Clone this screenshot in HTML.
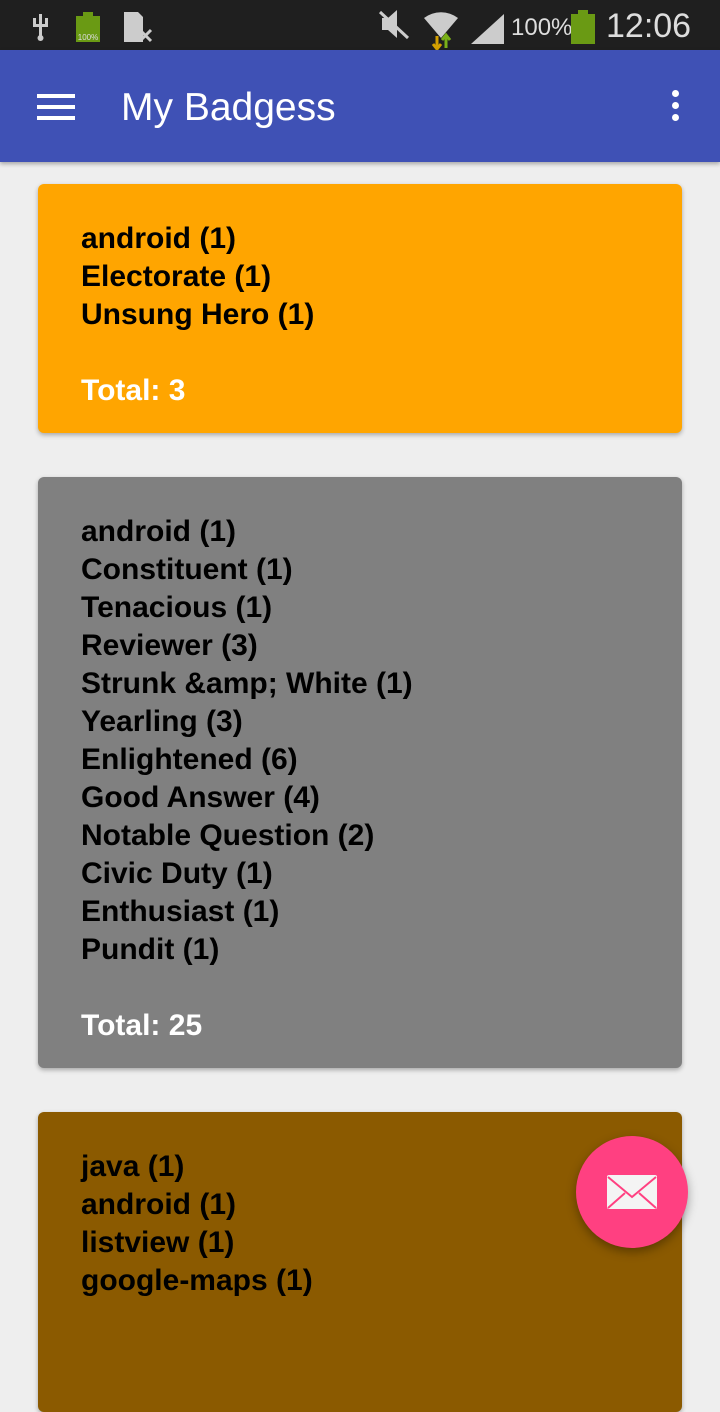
<!DOCTYPE html>
<html><head><style>
body{margin:0;width:720px;height:1280px;overflow:hidden;background:#eeeeee;font-family:"Liberation Sans",sans-serif;position:relative}
.sb{height:50px;background:#1f1f1f;position:relative;color:#ddd}
.ab{height:112px;background:#3f51b5;position:relative;box-shadow:0 2px 4px rgba(0,0,0,.3)}
.card{position:absolute;left:38px;width:644px;border-radius:6px;box-shadow:0 2px 5px rgba(0,0,0,.3);box-sizing:border-box;padding:36px 0 24px 43px;font-weight:bold;font-size:30px;line-height:38px;color:#000}
.t{color:#fff}
</style></head><body>
<div class="sb">
<svg width="720" height="50" style="position:absolute;left:0;top:0">
<g fill="#ccc"><rect x="39" y="14" width="3" height="26"/><rect x="33" y="18" width="3" height="7"/><rect x="45" y="18" width="3" height="7"/><rect x="33" y="24" width="15" height="3"/><circle cx="40.5" cy="38" r="3"/></g>
<rect x="76" y="16" width="24" height="26" fill="#6a9a14"/><rect x="83" y="12" width="10" height="4" fill="#6a9a14"/>
<text x="88" y="40" font-size="8" fill="#ddd" text-anchor="middle">100%</text>
<path d="M124 12h14l5 5v25h-19z" fill="#ccc"/><path d="M140 30l11 11M151 30l-11 11" stroke="#ccc" stroke-width="3"/>
<path d="M382 18h6l9-8v28l-9-8h-6z" fill="#ccc"/><path d="M380 12l28 26" stroke="#ccc" stroke-width="3"/>
<path d="M424 18a28 28 0 0 1 34 0l-17 20z" fill="#ccc"/>
<path d="M437 36v12M433 44l4 5 4-5" stroke="#d4a000" stroke-width="3" fill="none"/>
<path d="M446 48v-12M442 40l4-5 4 5" stroke="#7ab018" stroke-width="3" fill="none"/>
<path d="M471 44l33-30v30z" fill="#ccc"/>
<text x="511" y="35" font-size="24" fill="#ddd">100%</text>
<rect x="571" y="14" width="24" height="30" fill="#6a9a14"/><rect x="578" y="10" width="10" height="4" fill="#6a9a14"/>
<text x="606" y="37" font-size="34" fill="#ddd">12:06</text>
</svg></div>
<div class="ab">
<div style="position:absolute;left:37px;top:44px;width:38px;height:4px;background:#fff;box-shadow:0 11px 0 #fff,0 22px 0 #fff"></div>
<div style="position:absolute;left:121px;top:36px;color:#fff;font-size:39px;line-height:44px">My Badgess</div>
<div style="position:absolute;left:672px;top:40px;width:7px;height:7px;border-radius:50%;background:#fff;box-shadow:0 12px 0 #fff,0 24px 0 #fff"></div>
</div>
<div class="card" style="top:184px;height:249px;background:#ffa500">android (1)<br>Electorate (1)<br>Unsung Hero (1)<br><br><span class="t">Total: 3</span></div>
<div class="card" style="top:477px;height:591px;background:#808080">android (1)<br>Constituent (1)<br>Tenacious (1)<br>Reviewer (3)<br>Strunk &amp;amp; White (1)<br>Yearling (3)<br>Enlightened (6)<br>Good Answer (4)<br>Notable Question (2)<br>Civic Duty (1)<br>Enthusiast (1)<br>Pundit (1)<br><br><span class="t">Total: 25</span></div>
<div class="card" style="top:1112px;height:300px;background:#8b5a00">java (1)<br>android (1)<br>listview (1)<br>google-maps (1)</div>
<div style="position:absolute;left:576px;top:1136px;width:112px;height:112px;border-radius:50%;background:#ff4081;box-shadow:0 4px 10px rgba(0,0,0,.35)"></div>
<svg style="position:absolute;left:606px;top:1174px" width="52" height="36"><rect x="1" y="1" width="50" height="34" rx="2" fill="#f4f4f4"/><path d="M2 3l24 20 24-20M2 34l17-15M50 34l-17-15" stroke="#ff4081" stroke-width="2" fill="none"/></svg>
</body></html>
